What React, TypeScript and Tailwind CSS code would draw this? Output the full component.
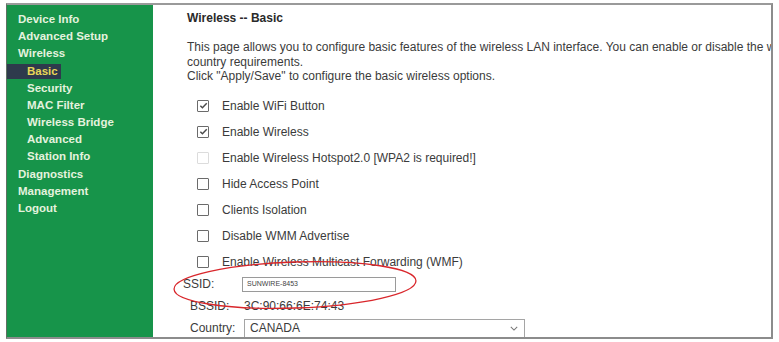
import React from 'react';

const menu: { label: string; sub?: boolean; active?: boolean }[] = [
    { label: 'Device Info' },
    { label: 'Advanced Setup' },
    { label: 'Wireless' },
    { label: 'Basic', sub: true, active: true },
    { label: 'Security', sub: true },
    { label: 'MAC Filter', sub: true },
    { label: 'Wireless Bridge', sub: true },
    { label: 'Advanced', sub: true },
    { label: 'Station Info', sub: true },
    { label: 'Diagnostics' },
    { label: 'Management' },
    { label: 'Logout' },
];

const options: { label: string; checked?: boolean; disabled?: boolean }[] = [
    { label: 'Enable WiFi Button', checked: true },
    { label: 'Enable Wireless', checked: true },
    { label: 'Enable Wireless Hotspot2.0 [WPA2 is required!]', disabled: true },
    { label: 'Hide Access Point' },
    { label: 'Clients Isolation' },
    { label: 'Disable WMM Advertise' },
    { label: 'Enable Wireless Multicast Forwarding (WMF)' },
];

const CheckBox: React.FC<{ checked?: boolean; disabled?: boolean }> = ({ checked, disabled }) => (
    <span
        className={`w-[12px] h-[12px] border rounded-[1px] bg-white flex items-center justify-center ${
            disabled ? 'border-[#dcdcdc]' : 'border-[#6b6b6b]'
        }`}
    >
        {checked && (
            <svg viewBox="0 0 10 10" className="w-[9px] h-[9px]" fill="none" stroke="#4a4a4a" strokeWidth="1.6">
                <path d="M1.5 5.2l2.3 2.3L8.6 2.4" />
            </svg>
        )}
    </span>
);

export default function App() {
    return (
        <div
            className="w-[779px] h-[342px] bg-white overflow-hidden pt-[3px] pl-[6px]"
            style={{ fontFamily: '"Liberation Sans", Arial, sans-serif' }}
        >
            <div className="w-[767px] h-[336px] border-t-2 border-r-2 border-b-2 border-l border-t-[#9a9a9a] border-r-[#8c8c8c] border-b-[#8c8c8c] border-l-[#5f6f62] flex">
                {/* Sidebar */}
                <div className="w-[146px] shrink-0 h-full bg-[#17944a] pt-[6px]">
                    {menu.map((m) => (
                        <div key={m.label} className="h-[17.2px] flex items-center">
                            {m.active ? (
                                <div className="w-[54px] h-[15px] bg-[#2e3a4c] flex items-center pl-[20px] text-[#e8d757] text-[11.5px] font-bold">
                                    {m.label}
                                </div>
                            ) : (
                                <span
                                    className={`text-[11.5px] font-bold text-[#e4f2de] ${m.sub ? 'pl-[20px]' : 'pl-[11px]'}`}
                                >
                                    {m.label}
                                </span>
                            )}
                        </div>
                    ))}
                </div>

                {/* Content */}
                <div className="flex-1 min-w-0 relative overflow-hidden text-[#3b3b3b] text-[12px]">
                    <div className="pl-[34px] pt-[6px] whitespace-nowrap">
                        <div className="font-bold text-[#2a2a2a] leading-[14px]">Wireless -- Basic</div>
                        <div className="mt-[15px] leading-[14.5px]">
                            <div>This page allows you to configure basic features of the wireless LAN interface. You can enable or disable the wireless LAN</div>
                            <div>country requirements.</div>
                            <div>Click "Apply/Save" to configure the basic wireless options.</div>
                        </div>
                    </div>

                    <div className="mt-[9px] pl-[44px]">
                        {options.map((o) => (
                            <div key={o.label} className="h-[26px] flex items-center gap-[13px] whitespace-nowrap">
                                <CheckBox checked={o.checked} disabled={o.disabled} />
                                <span>{o.label}</span>
                            </div>
                        ))}
                    </div>

                    <div className="pl-[30px]">
                        <div className="h-[19px] flex items-center">
                            <span className="w-[59px]">SSID:</span>
                            <div className="w-[154px] h-[15px] border border-[#9a9a9a] bg-white flex items-center pl-[4px] text-[7px] text-[#444]">
                                SUNWIRE-8453
                            </div>
                        </div>
                        <div className="h-[25px] flex items-center pl-[7px]">
                            <span className="w-[54px]">BSSID:</span>
                            <span>3C:90:66:6E:74:43</span>
                        </div>
                        <div className="h-[19px] flex items-center pl-[7px]">
                            <span className="w-[54px]">Country:</span>
                            <div className="w-[281px] h-[19px] border border-[#a5a5a5] bg-white flex items-center justify-between pl-[5px] pr-[6px]">
                                <span>CANADA</span>
                                <svg viewBox="0 0 10 6" className="w-[8px] h-[5px]" fill="none" stroke="#777" strokeWidth="1.3">
                                    <path d="M1 1l4 4 4-4" />
                                </svg>
                            </div>
                        </div>
                    </div>

                    {/* Red annotation ellipse */}
                    <svg className="absolute left-[12px] top-[251px] w-[260px] h-[60px] pointer-events-none" viewBox="0 0 260 60">
                        <ellipse cx="130" cy="29" rx="121" ry="23" fill="none" stroke="#d9262b" strokeWidth="1.3" transform="rotate(-2 130 29)" />
                    </svg>
                </div>
            </div>
        </div>
    );
}
